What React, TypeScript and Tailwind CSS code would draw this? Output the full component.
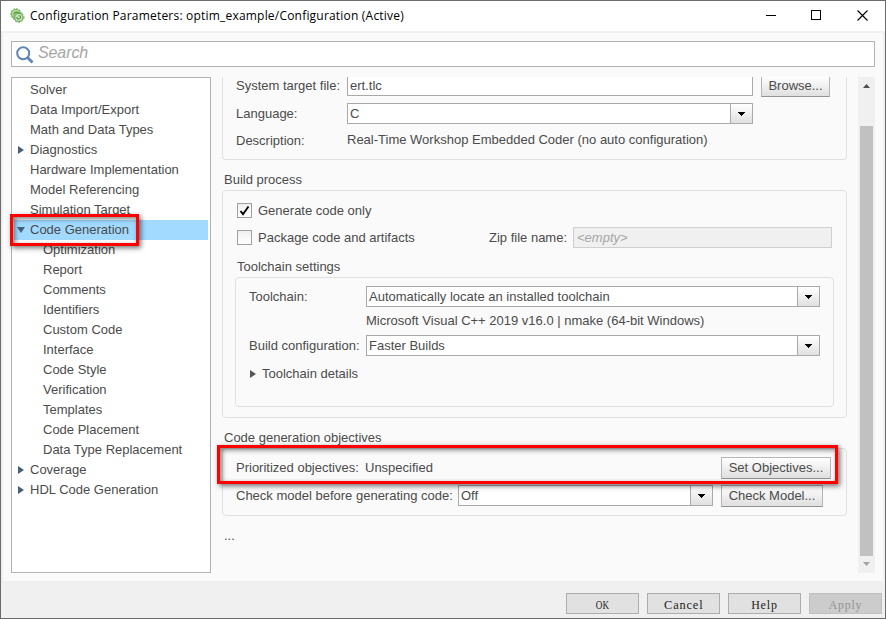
import { type ReactNode } from "react";
import { cva } from "class-variance-authority";
import clsx from "clsx";

type TreeItem = {
  label: string;
  level?: number;
  state?: "open" | "closed";
  selected?: boolean;
};

const treeItems: TreeItem[] = [
  { label: "Solver" },
  { label: "Data Import/Export" },
  { label: "Math and Data Types" },
  { label: "Diagnostics", state: "closed" },
  { label: "Hardware Implementation" },
  { label: "Model Referencing" },
  { label: "Simulation Target" },
  { label: "Code Generation", state: "open", selected: true },
  { label: "Optimization", level: 1 },
  { label: "Report", level: 1 },
  { label: "Comments", level: 1 },
  { label: "Identifiers", level: 1 },
  { label: "Custom Code", level: 1 },
  { label: "Interface", level: 1 },
  { label: "Code Style", level: 1 },
  { label: "Verification", level: 1 },
  { label: "Templates", level: 1 },
  { label: "Code Placement", level: 1 },
  { label: "Data Type Replacement", level: 1 },
  { label: "Coverage", state: "closed" },
  { label: "HDL Code Generation", state: "closed" },
];

function Arrow({ open, className }: { open?: boolean; className?: string }) {
  return (
    <svg viewBox="0 0 8 8" className={clsx("size-2 shrink-0 fill-current", className)}>
      <path d={open ? "M0 1h8L4 7z" : "M1 0l6 4-6 4z"} />
    </svg>
  );
}

function ModelIcon() {
  return (
    <svg viewBox="0 0 16 16" className="size-4 shrink-0" fill="none">
      <circle cx="7" cy="6" r="4.600" fill="#b9dda4" stroke="#7dbb6a" strokeWidth="1.300" />
      <circle cx="7" cy="6" r="5.500" stroke="#86c074" strokeWidth="1" strokeDasharray="1.600 1.600" />
      <circle cx="9.800" cy="9.400" r="4.200" fill="#c6e3b5" stroke="#6fae5c" strokeWidth="1.300" />
      <circle cx="9.800" cy="9.400" r="5.200" stroke="#7ab867" strokeWidth="1" strokeDasharray="1.700 1.700" />
      <path d="M4.500 6.500c.5-2.500 4-3.500 6-.8M7.600 9.200c.4 2 2.600 2.300 3.600.8s-.4-2.600-1.700-2" stroke="#56964a" strokeWidth="1.100" />
    </svg>
  );
}

function TitleBar() {
  return (
    <header className="flex h-[30px] items-center bg-white pl-2">
      <ModelIcon />
      <h1 className="ml-[5px] w-[400px] font-['Open_Sans',sans-serif] text-[12px] leading-4 tracking-[0.2px] whitespace-nowrap text-black">
        Configuration Parameters: optim_example/Configuration (Active)
      </h1>
      <svg viewBox="0 0 104 12" className="mr-[15px] ml-auto h-3 w-[104px]" fill="none" stroke="#000" shapeRendering="crispEdges">
        <path d="M0 5.500h10M45.500.5h9v9h-9z" />
        <path d="M91.500.5l10 10M101.500.5l-10 10" shapeRendering="auto" strokeWidth="1.100" />
      </svg>
    </header>
  );
}

function Tree() {
  return (
    <nav className="relative h-[496px] w-[200px] shrink-0 border border-[#b2b2b2] bg-white pt-0.5">
      {treeItems.map((item) => (
        <div
          key={item.label}
          className={clsx(
            "mr-0.5 ml-0.5 flex h-5 items-center pb-px",
            item.selected && "bg-[#a1d9ff]",
            item.level ? "pl-[29px]" : "pl-[3px]",
          )}
        >
          {!item.level && (
            <span className="w-[13px] shrink-0 text-[#46607c]">
              {item.state && <Arrow open={item.state === "open"} />}
            </span>
          )}
          <span className="whitespace-nowrap">{item.label}</span>
        </div>
      ))}
      <Highlight className="top-[136px] left-[-2px] h-8 w-[129px]" />
    </nav>
  );
}

function Highlight({ className }: { className: string }) {
  return (
    <div className={clsx("pointer-events-none absolute z-10", className)}>
      <div className="size-full border-[3px] border-[#f00] shadow-[2px_2px_5px_rgba(0,0,0,0.55),inset_2px_2px_5px_rgba(0,0,0,0.5)]" />
    </div>
  );
}

function Select({ value, className }: { value: string; className: string }) {
  return (
    <div className={clsx("flex h-[21px] shrink-0 border border-[#a9a9a9] bg-white", className)}>
      <span className="flex-1 pl-0.5 leading-[19px] whitespace-nowrap">{value}</span>
      <span className="flex w-[22px] items-center justify-center border-l border-[#a9a9a9] bg-linear-to-b from-white to-[#e0e0e0]">
        <svg viewBox="0 0 7 4" className="mt-px h-1 w-[7px]" shapeRendering="crispEdges">
          <path d="M0 0h7v1H6v1H5v1H4v1H3V3H2V2H1V1H0z" />
        </svg>
      </span>
    </div>
  );
}

function PushButton({ children, className }: { children: ReactNode; className: string }) {
  return (
    <button
      className={clsx(
        "h-[22px] shrink-0 border border-[#b5b5b5] border-b-[#939393] bg-linear-to-b from-white to-[#dfdfdf] text-center leading-5 whitespace-nowrap",
        className,
      )}
    >
      {children}
    </button>
  );
}

function Checkbox({ checked, children }: { checked?: boolean; children: ReactNode }) {
  return (
    <label className="flex h-[15px] items-center leading-[15px]">
      <span className="flex size-[15px] items-center justify-center border border-[#a0a0a0] bg-linear-to-b from-[#efefef] to-white">
        {checked && (
          <svg viewBox="0 0 11 11" className="size-[11px]" fill="none" stroke="#000" strokeWidth="1.900">
            <path d="M1.500 6l2.500 3.200L9.500 1.500" />
          </svg>
        )}
      </span>
      <span className="ml-1.5 whitespace-nowrap">{children}</span>
    </label>
  );
}

function Group({ children, className }: { children: ReactNode; className: string }) {
  return (
    <section className={clsx("rounded-[4px] border border-[#e0e0e0]", className)}>{children}</section>
  );
}

function Settings() {
  return (
    <main className="ml-[11px] h-[496px] w-[625px] shrink-0">
      <Group className="h-[83px] overflow-hidden rounded-t-none border-t-0 pl-[13px]">
        <div className="flex h-5 items-start">
          <span className="w-[111px] leading-[18px]">System target file:</span>
          <div className="h-[19px] w-[406px] border border-t-0 border-[#a9a9a9] bg-white pl-0.5 leading-[18px]">
            ert.tlc
          </div>
          <PushButton className="ml-2 h-5! w-[69px] border-t-0 pb-0.5 leading-[17px]!">Browse...</PushButton>
        </div>
        <div className="mt-1.5 flex h-[21px]">
          <span className="w-[111px] leading-[21px]">Language:</span>
          <Select value="C" className="w-[406px]" />
        </div>
        <div className="mt-1.5 flex h-5">
          <span className="w-[111px] leading-[22px]">Description:</span>
          <span className="leading-5 whitespace-nowrap">
            Real-Time Workshop Embedded Coder (no auto configuration)
          </span>
        </div>
      </Group>

      <h2 className="mt-3 ml-0.5 h-[18px] leading-4">Build process</h2>
      <Group className="h-[228px] pt-3 pl-3.5">
        <Checkbox checked>Generate code only</Checkbox>
        <div className="mt-1.5 flex h-[27px] items-center">
          <div className="w-[252px]">
            <Checkbox>Package code and artifacts</Checkbox>
          </div>
          <span className="w-[84px] leading-[19px]">Zip file name:</span>
          <div className="h-[21px] w-[259px] border border-[#cfcfcf] bg-[#f0f0f0] pl-[3px] leading-[19px] text-[#a5a5a5] italic">
            &lt;empty&gt;
          </div>
        </div>
        <h3 className="mt-1 h-[22px] leading-[23px]">Toolchain settings</h3>
        <Group className="-ml-0.5 h-[130px] w-[599px] pt-2 pl-[13px]">
          <div className="flex">
            <span className="w-[117px] leading-[21px]">Toolchain:</span>
            <Select value="Automatically locate an installed toolchain" className="w-[454px]" />
          </div>
          <p className="ml-[117px] h-7 leading-7">
            Microsoft Visual C++ 2019 v16.0 | nmake (64-bit Windows)
          </p>
          <div className="flex">
            <span className="w-[117px] leading-[21px] whitespace-nowrap">Build configuration:</span>
            <Select value="Faster Builds" className="w-[454px]" />
          </div>
          <div className="mt-2 flex h-5 items-center pb-px">
            <Arrow className="text-[#555]" />
            <span className="ml-[5px]">Toolchain details</span>
          </div>
        </Group>
      </Group>

      <div className="relative pt-3">
        <h2 className="ml-0.5 h-[18px] leading-4">Code generation objectives</h2>
        <Group className="h-[68px] pt-2 pl-[13px]">
          <div className="flex h-[22px]">
            <span className="w-[129px] leading-[21px] whitespace-nowrap">Prioritized objectives:</span>
            <span className="w-[356px] leading-[21px]">Unspecified</span>
            <PushButton className="w-[110px]">Set Objectives...</PushButton>
          </div>
          <div className="mt-1.5 flex h-[22px]">
            <span className="w-[222px] leading-[21px] whitespace-nowrap">
              Check model before generating code:
            </span>
            <Select value="Off" className="w-[255px]" />
            <PushButton className="ml-2 w-[102px]">Check Model...</PushButton>
          </div>
        </Group>
        <Highlight className="top-[27px] left-[-5px] h-[39px] w-[621px]" />
      </div>
      <p className="mt-3 ml-0.5 leading-4">...</p>
    </main>
  );
}

function ScrollBar() {
  return (
    <div className="ml-[11px] flex h-[496px] w-[17px] flex-col bg-[#f0f0f0]">
      <svg viewBox="0 0 17 17" className="h-[49px] w-[17px] shrink-0 fill-[#505050]" preserveAspectRatio="xMidYMin">
        <path d="M5 11l3.500-4 3.500 4z" />
      </svg>
      <div className="ml-0.5 h-[430px] w-[13px] shrink-0 bg-[#c1c1c1]" />
      <svg viewBox="0 0 17 17" className="size-[17px] shrink-0 fill-[#a3a3a3]">
        <path d="M5 6l3.500 4 3.500-4z" />
      </svg>
    </div>
  );
}

const dialogButton = cva(
  "h-[21px] w-[73px] border text-center font-['Liberation_Serif',serif] text-[13px] leading-[21px]",
  {
    variants: {
      disabled: {
        true: "border-[#bfbfbf] bg-[#cccccc] text-[#929292]",
        false: "border-[#adadad] bg-[#e1e1e1] text-[#222]",
      },
    },
  },
);

function DialogButton({ label, disabled = false, textClass }: { label: string; disabled?: boolean; textClass: string }) {
  return (
    <button className={dialogButton({ disabled })} disabled={disabled}>
      <span className={clsx("inline-block", textClass)}>{label}</span>
    </button>
  );
}

function Footer() {
  return (
    <footer className="flex justify-end gap-2 pt-3 pr-[3px]">
      <DialogButton label="OK" textClass="scale-x-[0.7]" />
      <DialogButton label="Cancel" textClass="scale-x-[0.95] tracking-[0.9px]" />
      <DialogButton label="Help" textClass="scale-x-[0.92] tracking-[0.9px]" />
      <DialogButton label="Apply" textClass="scale-x-[0.9] tracking-[0.9px]" disabled />
    </footer>
  );
}

export default function App() {
  return (
    <div className="h-[619px] w-[886px] overflow-hidden border border-[#6b6b6b] bg-[#f0f0f0] font-['Liberation_Sans',Arial,sans-serif] text-[13px] text-[#4b4b4b]">
      <TitleBar />
      <div className="mt-0.5 mr-0.5 ml-0.5 h-[548px] bg-[#fafafa] px-2 pt-2">
        <div className="flex h-[26px] w-[864px] items-center border border-[#b2b2b2] bg-white pl-1">
          <svg viewBox="0 0 18 18" className="mt-0.5 size-[18px]" fill="none" stroke="#5f87b3">
            <circle cx="7.200" cy="7.200" r="6" strokeWidth="2" />
            <path d="M11.500 11.500l5 5" strokeWidth="2.800" />
          </svg>
          <span className="ml-1 pb-[3px] text-[16px] leading-5 tracking-[-0.1px] text-[#a5a5a5] italic">Search</span>
        </div>
        <div className="mt-2.5 flex">
          <Tree />
          <Settings />
          <ScrollBar />
        </div>
      </div>
      <Footer />
    </div>
  );
}
